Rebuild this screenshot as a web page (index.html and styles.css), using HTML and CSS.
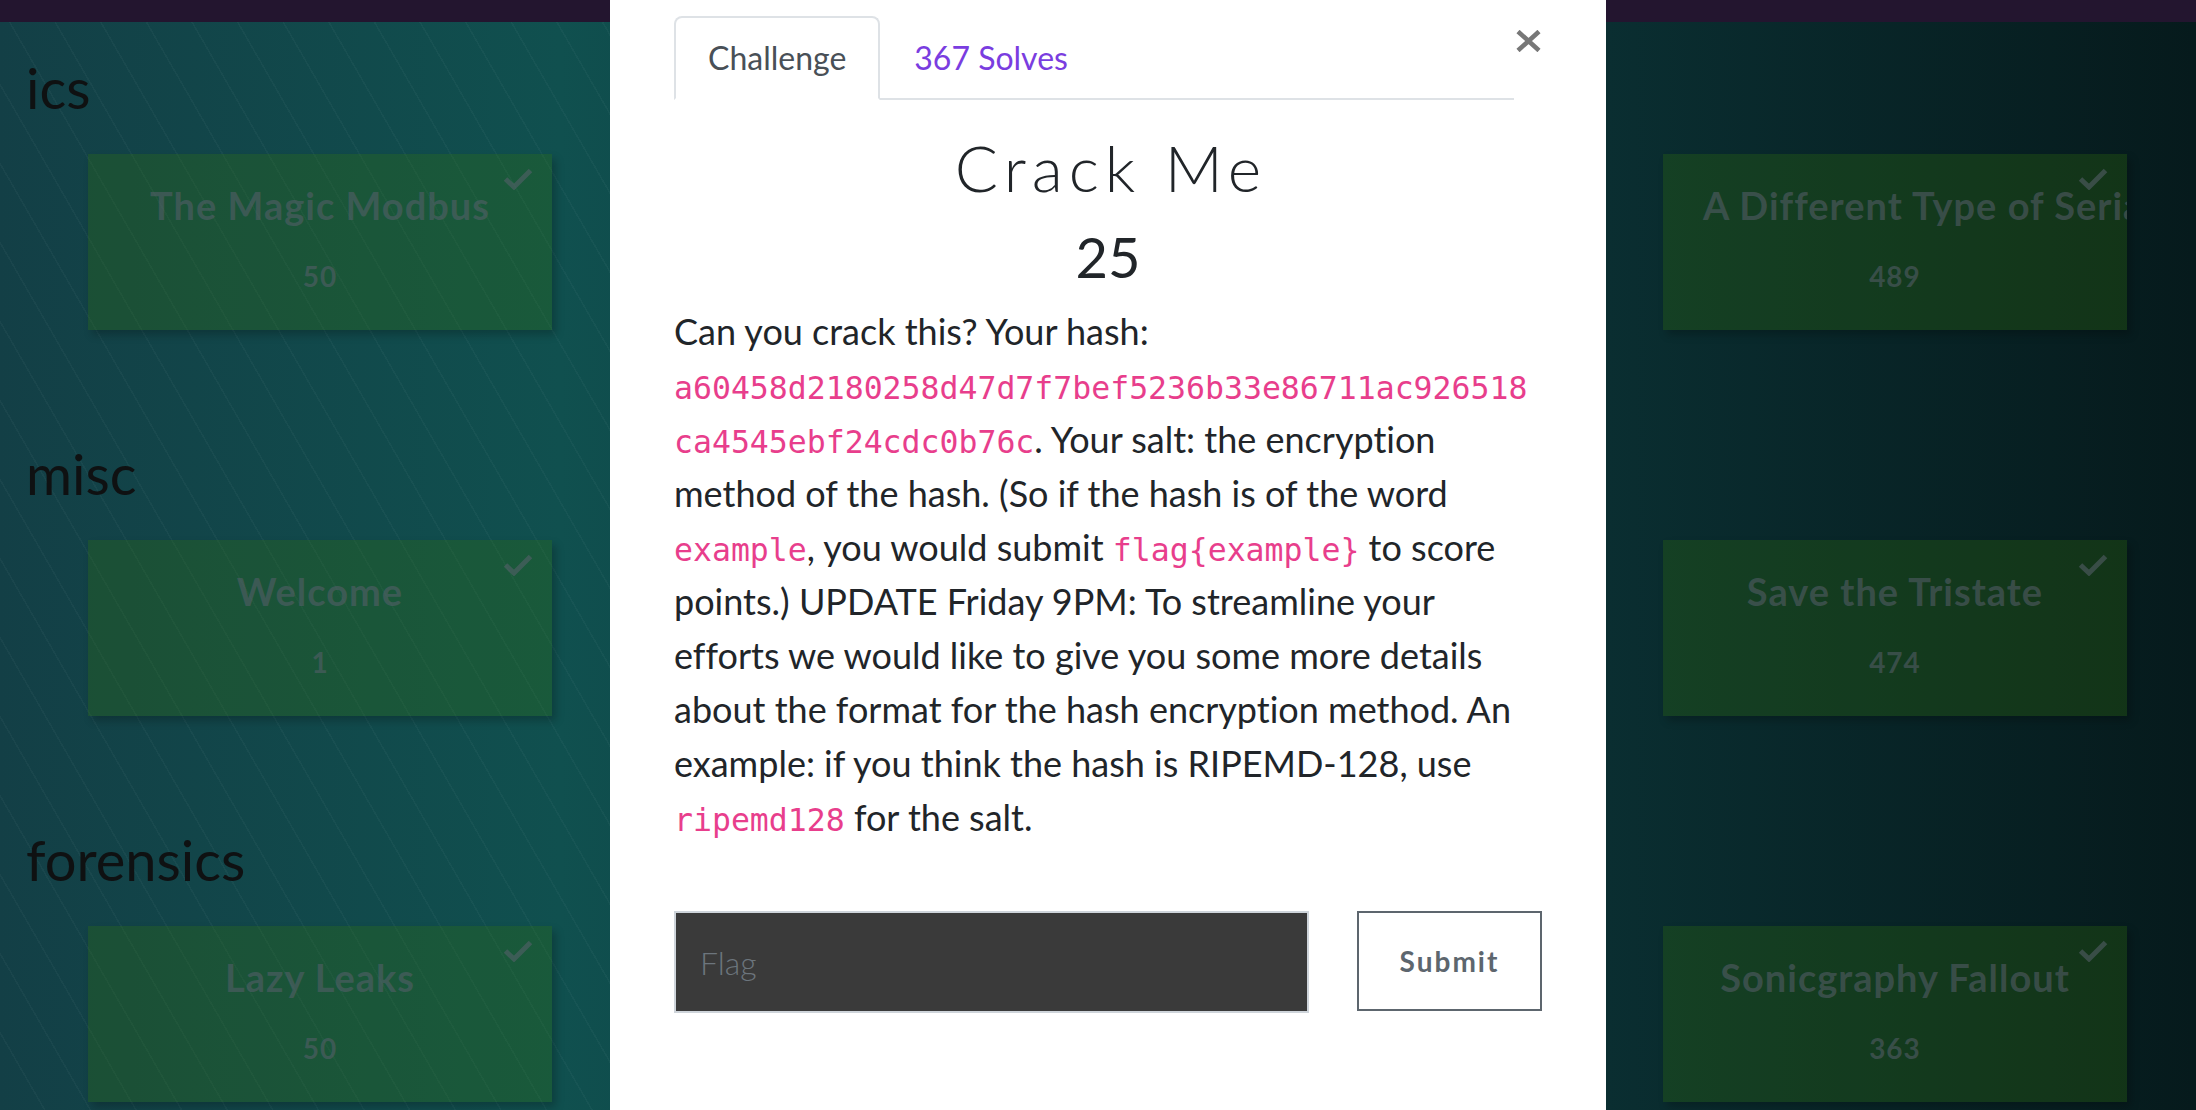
FILE: index.html
```html
<!DOCTYPE html>
<html lang="en">
<head>
<meta charset="utf-8">
<title>Crack Me</title>
<link rel="stylesheet" href="styles.css">
</head>
<body>
<div class="page">
  <header class="topbar"></header>
  <main class="board">
    <section class="category">
      <h3 class="category-title">ics</h3>
      <div class="card-row">
        <div class="card">
          <div class="card-name">The Magic Modbus</div>
          <div class="card-value">50</div>
          <svg class="check" viewBox="0 0 30 22" width="30" height="22"><polyline points="2.5,11 11,19 27.5,2.5"/></svg>
        </div>
        <div class="card card-last">
          <div class="card-name">A Different Type of Serial</div>
          <div class="card-value">489</div>
          <svg class="check" viewBox="0 0 30 22" width="30" height="22"><polyline points="2.5,11 11,19 27.5,2.5"/></svg>
        </div>
      </div>
    </section>
    <section class="category">
      <h3 class="category-title">misc</h3>
      <div class="card-row">
        <div class="card">
          <div class="card-name">Welcome</div>
          <div class="card-value">1</div>
          <svg class="check" viewBox="0 0 30 22" width="30" height="22"><polyline points="2.5,11 11,19 27.5,2.5"/></svg>
        </div>
        <div class="card card-last">
          <div class="card-name">Save the Tristate</div>
          <div class="card-value">474</div>
          <svg class="check" viewBox="0 0 30 22" width="30" height="22"><polyline points="2.5,11 11,19 27.5,2.5"/></svg>
        </div>
      </div>
    </section>
    <section class="category">
      <h3 class="category-title">forensics</h3>
      <div class="card-row">
        <div class="card">
          <div class="card-name">Lazy Leaks</div>
          <div class="card-value">50</div>
          <svg class="check" viewBox="0 0 30 22" width="30" height="22"><polyline points="2.5,11 11,19 27.5,2.5"/></svg>
        </div>
        <div class="card card-last">
          <div class="card-name">Sonicgraphy Fallout</div>
          <div class="card-value">363</div>
          <svg class="check" viewBox="0 0 30 22" width="30" height="22"><polyline points="2.5,11 11,19 27.5,2.5"/></svg>
        </div>
      </div>
    </section>
  </main>

  <div class="modal">
    <div class="modal-header">
      <nav class="tabs">
        <a class="tab tab-active">Challenge</a>
        <a class="tab tab-link">367 Solves</a>
      </nav>
      <button class="close" aria-label="Close">
        <svg viewBox="0 0 25 22" width="25" height="22"><path d="M2 1.5 L23 20.5 M23 1.5 L2 20.5"/></svg>
      </button>
    </div>
    <h2 class="chal-name">Crack Me</h2>
    <h3 class="chal-value">25</h3>
    <p class="chal-desc">Can you crack this? Your hash: <code>a60458d2180258d47d7f7bef5236b33e86711ac926518ca4545ebf24cdc0b76c</code>. Your salt: the encryption method of the hash. (So if the hash is of the word <code>example</code>, you would submit <code>flag{example}</code> to score points.) UPDATE Friday 9PM: To streamline your efforts we would like to give you some more details about the format for the hash encryption method. An example: if you think the hash is RIPEMD-128, use <code>ripemd128</code> for the salt.</p>
    <form class="flag-row">
      <input class="flag-input" type="text" placeholder="Flag">
      <button class="submit" type="button">Submit</button>
    </form>
  </div>
</div>
</body>
</html>
```

FILE: styles.css
```css
* { box-sizing: border-box; }

html, body {
  margin: 0;
  padding: 0;
}

body {
  width: 2196px;
  height: 1110px;
  overflow: hidden;
  font-family: "Lato", "Liberation Sans", sans-serif;
  font-variant-ligatures: none;
  color: #212529;
}

.page {
  position: relative;
  width: 2196px;
  height: 1110px;
  overflow: hidden;
  background:
    repeating-linear-gradient(60deg, rgba(255,255,255,0) 0 38px, rgba(255,255,255,0.03) 38px 39.5px) 0 0 / 610px 100% no-repeat,
    linear-gradient(to right, #133f46 0, #10504f 560px, #0d4244 900px, #0a2e31 1606px, #061a1c 2196px);
}

.topbar {
  height: 22px;
  background: #23152f;
}

.board {
  padding: 32px 0 0 26px;
}

.category {
  margin-bottom: 110px;
}

.category-title {
  margin: 0;
  font-size: 56px;
  line-height: 67px;
  font-weight: 400;
  color: #0f1112;
}

.card-row {
  margin: 33px 0 0 62px;
  display: grid;
  grid-template-columns: repeat(4, 464px);
  column-gap: 61px;
}

.card {
  position: relative;
  height: 176px;
  padding: 28px 40px 0;
  overflow: hidden;
  text-align: center;
  background: rgba(53, 117, 9, 0.27);
  box-shadow: 4px 5px 8px rgba(0, 0, 0, 0.22);
  color: rgba(90, 96, 110, 0.55);
  font-weight: 700;
}

.card-last {
  grid-column: 4;
}

.card-name {
  font-size: 38px;
  line-height: 46px;
  letter-spacing: 1px;
  white-space: nowrap;
}

.card-value {
  margin-top: 31px;
  font-size: 28px;
  line-height: 34px;
  letter-spacing: 1px;
}

.check {
  position: absolute;
  top: 14px;
  right: 19px;
  fill: none;
  stroke: rgba(90, 96, 110, 0.55);
  stroke-width: 5;
}

/* modal */
.modal {
  position: absolute;
  top: 0;
  left: 610px;
  width: 996px;
  height: 1110px;
  background: #fff;
  padding: 16px 64px 0;
}

.modal-header {
  display: flex;
  align-items: flex-start;
}

.tabs {
  flex: 1;
  display: flex;
  border-bottom: 2px solid #dee2e6;
}

.tab {
  display: block;
  margin-bottom: -2px;
  padding: 16px 32px;
  border: 2px solid transparent;
  border-top-left-radius: 8px;
  border-top-right-radius: 8px;
  font-size: 32px;
  line-height: 48px;
  text-decoration: none;
}

.tab-active {
  color: #495057;
  border-color: #dee2e6 #dee2e6 #fff;
  background: #fff;
}

.tab-link {
  color: #7a3de0;
}

.close {
  width: 28px;
  margin-top: 14px;
  padding: 0;
  border: 0;
  background: transparent;
  display: flex;
  justify-content: center;
}

.close svg {
  stroke: #777;
  stroke-width: 4.6;
  fill: none;
}

.chal-name {
  margin: 29px 0 0;
  padding-left: 6px;
  text-align: center;
  font-size: 64px;
  line-height: 77px;
  font-weight: 300;
  letter-spacing: 6px;
  color: #212529;
}

.chal-value {
  margin: 17px 0 0;
  text-align: center;
  font-size: 56px;
  line-height: 67px;
  font-weight: 400;
  color: #212529;
}

.chal-desc {
  margin: 14px 0 0;
  font-size: 36px;
  line-height: 54px;
  color: #212529;
}

.chal-desc code {
  font-family: "DejaVu Sans Mono", "Liberation Mono", monospace;
  font-size: 31.5px;
  line-height: 1;
  color: #e83e8c;
  overflow-wrap: break-word;
}

.flag-row {
  margin-top: 67px;
  display: flex;
  justify-content: space-between;
  align-items: flex-start;
}

.flag-input {
  width: 635px;
  height: 102px;
  padding: 0 24px;
  background: #3a3a3a;
  border: 2px solid #ced4da;
  font-family: "Lato", "Liberation Sans", sans-serif;
  font-size: 32px;
  font-weight: 300;
  color: #fff;
  outline: none;
}

.flag-input::placeholder {
  color: #6c757d;
}

.submit {
  width: 185px;
  height: 100px;
  background: #fff;
  border: 2px solid #5d666e;
  color: #5d666e;
  font-family: "Lato", "Liberation Sans", sans-serif;
  font-size: 28px;
  font-weight: 700;
  letter-spacing: 2px;
}
```
